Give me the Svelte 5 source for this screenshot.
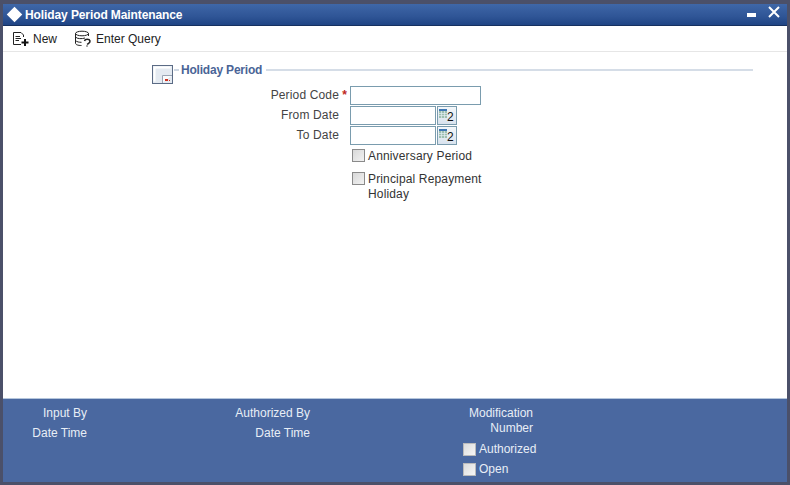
<script>
  let fields = [
    { label: 'From Date' },
    { label: 'To Date' },
  ];
</script>

<div class="window">
  <div class="titlebar">
    <span class="diamond"></span>
    <span class="title">Holiday Period Maintenance</span>
    <span class="spacer"></span>
    <span class="minimize"></span>
    <svg class="close" width="14" height="12" viewBox="0 0 14 12">
      <path d="M2 1 L12 11 M12 1 L2 11" stroke="#fff" stroke-width="2" fill="none" />
    </svg>
  </div>

  <div class="toolbar">
    <div class="tool">
      <svg width="18" height="17" viewBox="0 0 18 17">
        <path d="M1.5 2.5 H9 L11.5 5 V7 M1.5 2.5 V14.5 H9" stroke="#222" stroke-width="1" fill="none" />
        <path d="M3.5 6.5 H8 M3.5 8.5 H9 M3.5 10.5 H7" stroke="#222" stroke-width="1" fill="none" />
        <path d="M13 9 V16 M9.5 12.5 H16.5" stroke="#111" stroke-width="2" fill="none" />
      </svg>
      <span>New</span>
    </div>
    <div class="tool query">
      <svg width="18" height="17" viewBox="0 0 18 17">
        <ellipse cx="8" cy="3.5" rx="6.5" ry="2.3" stroke="#222" fill="#fff" />
        <path d="M1.5 3.5 V13 C1.5 14.8 4 15.5 7.5 15.5 M14.5 3.5 V6 M1.5 7 C3 9 8 9 11 8 M1.5 10.5 C3 12 5 12.3 7.5 12.3" stroke="#222" fill="none" />
        <path d="M10.5 11 C11 8.5 15.5 8.5 16 11 C16.3 13 14 13.5 13.2 14.5 M13 16.5 L13 15.5" stroke="#222" stroke-width="1.5" fill="none" />
      </svg>
      <span>Enter Query</span>
    </div>
  </div>

  <div class="body">
    <div class="section-head">
      <svg class="section-icon" width="22" height="19" viewBox="0 0 22 19">
        <rect x="0.5" y="0.5" width="20" height="18" fill="#e4eaf1" stroke="#5b6b85" />
        <path d="M2.5 16.5 V2.5 H18.5" stroke="#fff" stroke-width="2" fill="none" />
        <path d="M10.5 18 V10.5 H20" stroke="#9aa5b5" fill="#fafbfc" />
        <rect x="13" y="14" width="3" height="2" fill="#cc3322" />
        <rect x="17" y="15" width="1" height="1" fill="#cc3322" />
      </svg>
      <span class="dash"></span>
      <span class="section-title">Holiday Period</span>
      <span class="rule"></span>
    </div>

    <div class="form">
      <div class="row">
        <span class="label">Period Code</span>
        <span class="star">*</span>
        <input class="code" type="text" />
      </div>
      {#each fields as f}
        <div class="row">
          <span class="label">{f.label}</span>
          <span class="star"></span>
          <input class="date" type="text" />
          <span class="cal">
            <svg width="8" height="9" viewBox="0 0 8 9">
              <rect x="0" y="0" width="8" height="2" fill="#3f78b5" />
              <rect x="0" y="2" width="8" height="7" fill="#9dbfb0" />
              <path d="M0 4.5 H8 M0 6.5 H8 M2.5 2 V9 M5.5 2 V9" stroke="#e2edf0" stroke-width="0.7" />
            </svg>
            <span class="cal-num">2</span>
          </span>
        </div>
      {/each}
      <label class="check first"><span class="box"></span><span>Anniversary Period</span></label>
      <label class="check second"><span class="box"></span><span>Principal Repayment<br />Holiday</span></label>
    </div>
  </div>

  <div class="footer">
    <div class="col col1">
      <div>Input By</div>
      <div>Date Time</div>
    </div>
    <div class="col col2">
      <div>Authorized By</div>
      <div>Date Time</div>
    </div>
    <div class="col3">
      <div class="mod">Modification<br />Number</div>
      <div class="fcheck auth"><span class="fbox"></span>Authorized</div>
      <div class="fcheck"><span class="fbox"></span>Open</div>
    </div>
  </div>
</div>

<style>
  :global(body) {
    margin: 0;
    font: 12px "Liberation Sans", Arial, sans-serif;
  }

  .window {
    width: 790px;
    height: 485px;
    box-sizing: border-box;
    border: 3px solid #4b5069;
    border-top-width: 4px;
    display: flex;
    flex-direction: column;
    background: #fff;
    color: #333;
  }

  .titlebar {
    height: 22px;
    flex: none;
    display: flex;
    align-items: center;
    background: linear-gradient(#3f67a8, #2f5596 60%, #1f4484);
    border-bottom: 1px solid #16305f;
    box-sizing: border-box;
    color: #fff;
    padding-left: 6px;
  }

  .diamond {
    width: 11px;
    height: 11px;
    background: #fff;
    transform: rotate(45deg);
    margin-right: 5px;
  }

  .title {
    font-weight: bold;
    font-size: 12px;
    letter-spacing: -0.1px;
  }

  .spacer {
    flex: 1;
  }

  .minimize {
    width: 9px;
    height: 4px;
    background: #fff;
    margin-right: 11px;
  }

  .close {
    margin-top: -6px;
    margin-right: 6px;
  }

  .toolbar {
    height: 26px;
    flex: none;
    box-sizing: border-box;
    display: flex;
    align-items: center;
    padding-left: 9px;
    border-bottom: 1px solid #e6e6e6;
    font-size: 12px;
    color: #222;
  }

  .tool {
    display: flex;
    align-items: center;
    gap: 3px;
  }

  .query {
    margin-left: 17px;
    gap: 4px;
  }

  .body {
    flex: 1;
    padding: 8px 34px 0 149px;
    min-height: 0;
  }

  .section-head {
    display: flex;
    align-items: center;
    height: 22px;
    margin-top: 1px;
  }

  .section-icon {
    margin-top: 5px;
  }

  .dash {
    width: 5px;
    height: 2px;
    background: #cfd8e3;
    margin-top: -5px;
  }

  .section-title {
    color: #4a6496;
    font-weight: bold;
    font-size: 12px;
    letter-spacing: -0.2px;
    margin: -5px 4px 0 2px;
  }

  .rule {
    flex: 1;
    height: 2px;
    background: #d5dde7;
    margin-top: -5px;
  }

  .form {
    margin-left: 48px;
    margin-top: 2px;
    color: #444;
  }

  .row {
    display: flex;
    align-items: center;
    height: 20px;
  }

  .label {
    width: 139px;
    text-align: right;
    letter-spacing: 0.15px;
  }

  .star {
    width: 8px;
    color: #c0281c;
    font-weight: bold;
    text-align: right;
    margin-right: 3px;
  }

  input {
    box-sizing: border-box;
    height: 19px;
    border: 1px solid #7a9cae;
    background: #fff;
    padding: 0;
    margin: 0;
  }

  .code {
    width: 131px;
  }

  .date {
    width: 86px;
  }

  .cal {
    width: 20px;
    height: 19px;
    margin-left: 1px;
    box-sizing: border-box;
    border: 1px solid #7a9cae;
    background: linear-gradient(#f4f7fa, #d9e3ee);
    display: flex;
    align-items: flex-start;
    padding: 2px 0 0 1px;
  }

  .cal-num {
    font-size: 12px;
    line-height: 10px;
    margin-top: 3px;
    color: #111;
  }

  .check {
    display: flex;
    align-items: flex-start;
    gap: 3px;
    margin-left: 152px;
    line-height: 15px;
    color: #333;
    letter-spacing: 0.15px;
  }

  .first {
    margin-top: 4px;
  }

  .second {
    margin-top: 8px;
  }

  .box {
    width: 13px;
    height: 13px;
    box-sizing: border-box;
    border: 1px solid #8a8a8a;
    background: linear-gradient(135deg, #d8d8d8, #f2f2f2);
    flex: none;
  }

  .footer {
    height: 84px;
    flex: none;
    box-sizing: border-box;
    background: #4a68a0;
    border-top: 1px solid #b5c6dc;
    color: #e8eef6;
    display: flex;
  }

  .col {
    text-align: right;
    padding-top: 7px;
  }

  .col div {
    height: 20px;
    line-height: 15px;
  }

  .col1 {
    width: 84px;
  }

  .col2 {
    width: 223px;
  }

  .col3 {
    width: 223px;
    padding-top: 7px;
    box-sizing: border-box;
  }

  .mod {
    text-align: right;
    line-height: 15px;
  }

  .fcheck {
    display: flex;
    align-items: center;
    margin-left: 153px;
    margin-right: -30px;
    gap: 3px;
    height: 20px;
  }

  .auth {
    margin-top: 3px;
  }

  .fbox {
    flex: none;
    width: 13px;
    height: 13px;
    background: linear-gradient(135deg, #dcdcdc, #f6f6f6);
    border: 1px solid #bbb;
    box-sizing: border-box;
  }
</style>
